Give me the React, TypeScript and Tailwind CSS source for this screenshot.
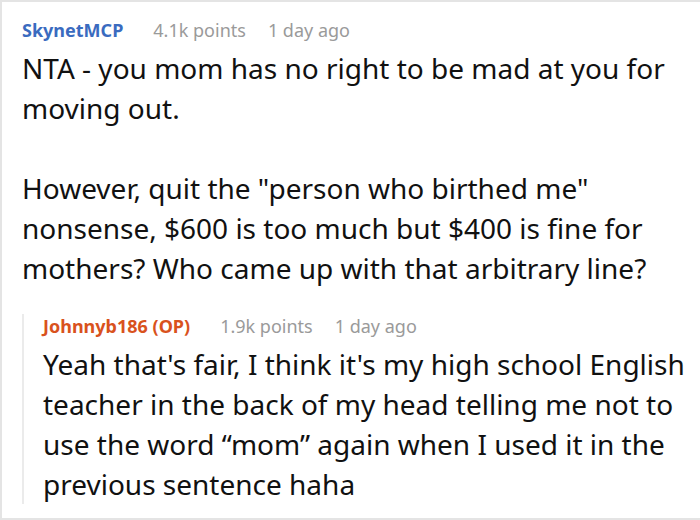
import React from 'react';

interface Comment {
  author: string;
  authorColor: string;
  points: string;
  age: string;
  paragraphs: string[];
}

const parent: Comment = {
  author: 'SkynetMCP',
  authorColor: 'text-[#3a6bbf]',
  points: '4.1k points',
  age: '1 day ago',
  paragraphs: [
    'NTA - you mom has no right to be mad at you for moving out.',
    'However, quit the "person who birthed me" nonsense, $600 is too much but $400 is fine for mothers? Who came up with that arbitrary line?',
  ],
};

const reply: Comment = {
  author: 'Johnnyb186 (OP)',
  authorColor: 'text-[#d9521d]',
  points: '1.9k points',
  age: '1 day ago',
  paragraphs: [
    'Yeah that\'s fair, I think it\'s my high school English teacher in the back of my head telling me not to use the word \u201cmom\u201d again when I used it in the previous sentence haha',
  ],
};

function CommentHeader({ c }: { c: Comment }) {
  return (
    <div className="flex items-baseline text-[18px] leading-[24px]">
      <span className={`font-bold ${c.authorColor}`}>{c.author}</span>
      <span className="ml-[30px] text-[#9a9a9a]">{c.points}</span>
      <span className="ml-[22px] text-[#9a9a9a]">{c.age}</span>
    </div>
  );
}

function CommentBody({ c }: { c: Comment }) {
  return (
    <div className="flex flex-col gap-[40px] text-[28px] leading-[40px] text-[#111111]">
      {c.paragraphs.map((p, i) => (
        <p key={i}>{p}</p>
      ))}
    </div>
  );
}

export default function App() {
  return (
    <div
      className="w-[700px] h-[520px] bg-white border-l-2 border-t-2 border-b-2 border-[#e4e4e4] overflow-hidden"
      style={{ fontFamily: '"Noto Sans", "Open Sans", sans-serif' }}
    >
      <div className="pl-[20px] pr-[12px] pt-[16px]">
        <CommentHeader c={parent} />
        <div className="mt-[6px]">
          <CommentBody c={parent} />
        </div>

        {/* Reply */}
        <div className="mt-[36px] border-l-2 border-[#ebebeb] pl-[19px]">
          <div className="-mt-[10px]">
            <CommentHeader c={reply} />
          </div>
          <div className="mt-[6px] -mb-[1px]">
            <CommentBody c={reply} />
          </div>
        </div>
      </div>
    </div>
  );
}
